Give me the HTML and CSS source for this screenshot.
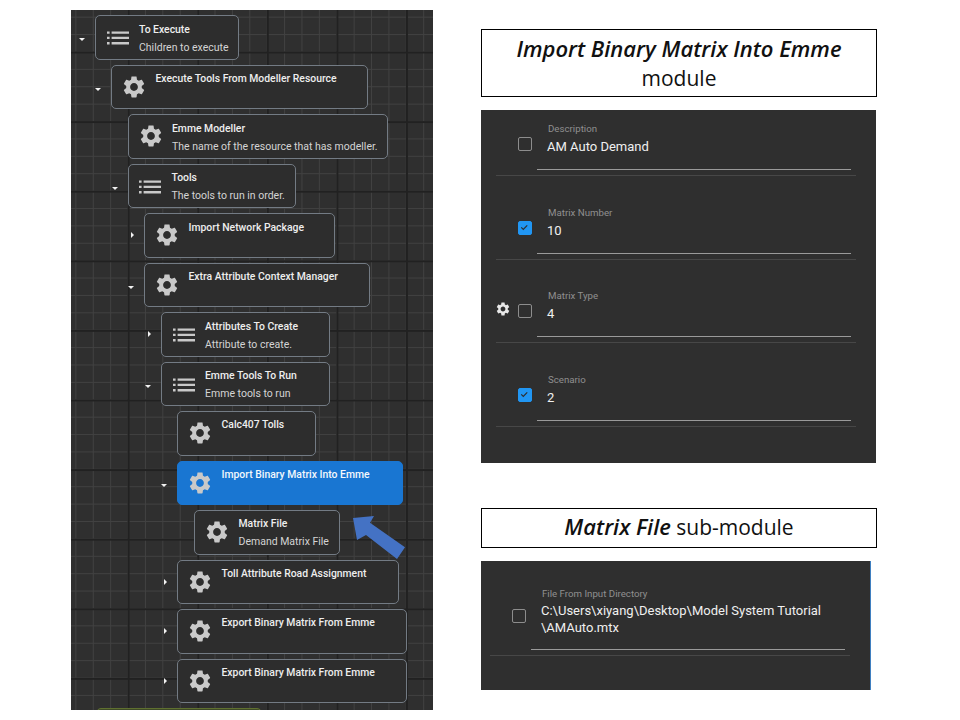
FILE: index.html
```html
<!DOCTYPE html>
<html lang="en">
<head>
<meta charset="utf-8">
<title>Import Binary Matrix Into Emme</title>
<link rel="stylesheet" href="styles.css">
</head>
<body>
<svg class="defs" width="0" height="0" aria-hidden="true">
  <symbol id="gear" viewBox="0 0 24 24"><path d="M19.14 12.94c.04-.3.06-.61.06-.94 0-.32-.02-.64-.07-.94l2.03-1.58c.18-.14.23-.41.12-.61l-1.92-3.32c-.12-.22-.37-.29-.59-.22l-2.39.96c-.5-.38-1.03-.7-1.62-.94L14.4 2.81c-.04-.24-.24-.41-.48-.41h-3.84c-.24 0-.43.17-.47.41L9.25 5.35c-.59.24-1.13.57-1.62.94l-2.39-.96c-.22-.08-.47 0-.59.22L2.74 8.87c-.12.21-.08.47.12.61l2.03 1.58c-.05.3-.09.63-.09.94s.02.64.07.94l-2.03 1.58c-.18.14-.23.41-.12.61l1.92 3.32c.12.22.37.29.59.22l2.39-.96c.5.38 1.03.7 1.62.94l.36 2.54c.05.24.24.41.48.41h3.84c.24 0 .44-.17.47-.41l.36-2.54c.59-.24 1.13-.56 1.62-.94l2.39.96c.22.08.47 0 .59-.22l1.92-3.32c.12-.22.07-.47-.12-.61l-2.01-1.58zM12 15.6c-1.98 0-3.6-1.62-3.6-3.6s1.62-3.6 3.6-3.6 3.6 1.62 3.6 3.6-1.62 3.6-3.6 3.6z"/></symbol>
  <symbol id="list" viewBox="0 0 22 14"><path d="M0 .5h2.6v2.3H0zM4.6.5H22v2.3H4.6zM0 5.8h2.6v2.3H0zM4.6 5.8H22v2.3H4.6zM0 11.1h2.6v2.3H0zM4.6 11.1H22v2.3H4.6z"/></symbol>
</svg>
<main class="page">
  <section class="canvas">
    <div class="tree">
      <div class="node w-hidden d0-hidden"></div>
      <div class="node d0 w1"><i class="tog down"></i><svg class="ico-list"><use href="#list"/></svg><div class="txt"><b>To Execute</b><span>Children to execute</span></div></div>
      <div class="node d1 w2"><i class="tog down"></i><svg class="ico-gear"><use href="#gear"/></svg><div class="txt"><b>Execute Tools From Modeller Resource</b></div></div>
      <div class="node d2 w3"><svg class="ico-gear"><use href="#gear"/></svg><div class="txt"><b>Emme Modeller</b><span>The name of the resource that has modeller.</span></div></div>
      <div class="node d2 w4"><i class="tog down"></i><svg class="ico-list"><use href="#list"/></svg><div class="txt"><b>Tools</b><span>The tools to run in order.</span></div></div>
      <div class="node d3 w5"><i class="tog right"></i><svg class="ico-gear"><use href="#gear"/></svg><div class="txt"><b>Import Network Package</b></div></div>
      <div class="node d3 w6"><i class="tog down"></i><svg class="ico-gear"><use href="#gear"/></svg><div class="txt"><b>Extra Attribute Context Manager</b></div></div>
      <div class="node d4 w7"><i class="tog right"></i><svg class="ico-list"><use href="#list"/></svg><div class="txt"><b>Attributes To Create</b><span>Attribute to create.</span></div></div>
      <div class="node d4 w7"><i class="tog down"></i><svg class="ico-list"><use href="#list"/></svg><div class="txt"><b>Emme Tools To Run</b><span>Emme tools to run</span></div></div>
      <div class="node d5 w8"><svg class="ico-gear"><use href="#gear"/></svg><div class="txt"><b>Calc407 Tolls</b></div></div>
      <div class="node d5 w9 selected"><i class="tog down"></i><svg class="ico-gear"><use href="#gear"/></svg><div class="txt"><b>Import Binary Matrix Into Emme</b></div></div>
      <div class="node d6 w10"><svg class="ico-gear"><use href="#gear"/></svg><div class="txt"><b>Matrix File</b><span>Demand Matrix File</span></div></div>
      <div class="node d5 w11"><i class="tog right"></i><svg class="ico-gear"><use href="#gear"/></svg><div class="txt"><b>Toll Attribute Road Assignment</b></div></div>
      <div class="node d5 w12"><i class="tog right"></i><svg class="ico-gear"><use href="#gear"/></svg><div class="txt"><b>Export Binary Matrix From Emme</b></div></div>
      <div class="node d5 w12"><i class="tog right"></i><svg class="ico-gear"><use href="#gear"/></svg><div class="txt"><b>Export Binary Matrix From Emme</b></div></div>
      <div class="node green"></div>
    </div>
    <svg class="arrow" viewBox="0 0 60 50"><polygon points="2,3 23,1 19,7.7 54,32.3 46,44 15,20 6,25"/></svg>
  </section>
  <section class="side">
    <h2 class="title big"><em>Import Binary Matrix Into Emme</em><br>module</h2>
    <div class="panel main">
      <div class="row"><span class="check"></span><div class="field"><label>Description</label><p>AM Auto Demand</p></div></div>
      <div class="row"><span class="check on"><svg viewBox="0 0 14 14"><path d="M3 7.2l2.7 2.7L11 4.4"/></svg></span><div class="field"><label>Matrix Number</label><p>10</p></div></div>
      <div class="row"><svg class="row-gear"><use href="#gear"/></svg><span class="check"></span><div class="field"><label>Matrix Type</label><p>4</p></div></div>
      <div class="row"><span class="check on"><svg viewBox="0 0 14 14"><path d="M3 7.2l2.7 2.7L11 4.4"/></svg></span><div class="field"><label>Scenario</label><p>2</p></div></div>
    </div>
    <h2 class="title small"><em>Matrix File</em> sub-module</h2>
    <div class="panel sub">
      <div class="row"><span class="check"></span><div class="field"><label>File From Input Directory</label><p>C:\Users\xiyang\Desktop\Model System Tutorial<br>\AMAuto.mtx</p></div></div>
    </div>
  </section>
</main>
</body>
</html>
```
FILE: styles.css
```css
* { box-sizing: border-box; }
html, body { margin: 0; padding: 0; background: #fff; }
.defs { position: absolute; }
.page { width: 960px; height: 720px; display: flex; align-items: flex-start; padding: 10px 0 0 71px; overflow: hidden; font-family: Roboto, "Liberation Sans", sans-serif; }

/* node-graph canvas */
.canvas {
  position: relative; width: 362px; height: 700px; overflow: hidden; flex: none;
  background-color: #2f2f2f;
  background-image:
    linear-gradient(#212121 1.5px, transparent 1.5px),
    linear-gradient(90deg, #212121 1.5px, transparent 1.5px),
    linear-gradient(#414141 1px, transparent 1px),
    linear-gradient(90deg, #414141 1px, transparent 1px);
  background-size: 69.6px 69.6px, 69.6px 69.6px, 17.4px 17.4px, 17.4px 17.4px;
  background-position: 0 41.5px, 56.6px 0, 0 6.7px, 4.4px 0;
}
.tree { display: flex; flex-direction: column; align-items: flex-start; gap: 4.9px; margin-top: -44.2px; }
.node {
  position: relative; flex: none; height: 44.6px; display: flex; align-items: flex-start;
  background: #2d2d2d; border: 1px solid #737b84; border-radius: 5px; color: #eee;
}
.d0 { margin-left: 24px; }
.d1 { margin-left: 40px; }
.d2 { margin-left: 56.5px; }
.d3 { margin-left: 73px; }
.d4 { margin-left: 90px; }
.d5 { margin-left: 106px; }
.d6 { margin-left: 123px; }
.d0-hidden { margin-left: 26px; width: 133px; }
.w1 { width: 143.5px; }
.w2 { width: 257px; }
.w3 { width: 260.5px; }
.w4 { width: 168.5px; }
.w5 { width: 190.5px; }
.w6 { width: 226px; }
.w7 { width: 168.5px; }
.w8 { width: 139px; }
.w9 { width: 225.5px; }
.w10 { width: 146px; }
.w11 { width: 221.5px; }
.w12 { width: 229.5px; }
.selected { background: #1976d2; border-color: #1976d2; color: #f4f8fc; }
.green { margin-left: 25px; width: 166px; background: #3f4a26; border-color: #5f7030; }

.ico-gear { width: 26px; height: 26px; margin: 8px 0 0 9px; flex: none; fill: #c9c9c9; }
.ico-list { width: 22px; height: 14px; margin: 15px 0 0 10.5px; flex: none; fill: #c9c9c9; }
.ico-gear + .txt { margin-left: 8.5px; }
.ico-list + .txt { margin-left: 10.5px; }
.txt { display: flex; flex-direction: column; padding-top: 6.3px; white-space: nowrap; font-size: 10.4px; }
.txt b { font-weight: 500; line-height: 14px; }
.txt span { font-weight: 400; font-size: 10.5px; line-height: 14px; margin-top: 4px; color: #d4d4d4; }

.tog { position: absolute; }
.tog.down { left: -17px; top: 22px; border-left: 3.5px solid transparent; border-right: 3.5px solid transparent; border-top: 3.5px solid #f2f2f2; }
.tog.right { left: -14px; top: 18px; border-top: 3.5px solid transparent; border-bottom: 3.5px solid transparent; border-left: 3.5px solid #f2f2f2; }

.arrow { position: absolute; left: 280px; top: 505px; width: 60px; height: 50px; fill: #4472c4; }

/* right column */
.side { margin-left: 48px; width: 396px; flex: none; display: flex; flex-direction: column; padding-top: 19px; }
.title { margin: 0; border: 1.5px solid #000; background: #fff; color: #111; text-align: center; font-family: "Open Sans", "Liberation Sans", sans-serif; font-weight: 400; font-size: 21px; line-height: 29px; }
.title em { font-weight: 600; font-style: italic; font-size: 22px; }
.title.big { height: 68px; padding-top: 3.5px; }
.title.small { height: 40px; margin-top: 45px; padding-top: 3px; }

.panel { background: #2f2f2f; color: #eee; }
.main { width: 395px; height: 353px; margin-top: 13px; padding: 0 20px 0 15px; }
.sub { width: 390px; height: 129px; margin-top: 13px; padding: 0 0 0 9px; border-right: 1px solid #3f7fc0; }
.row { position: relative; height: 66px; display: flex; align-items: flex-start; border-bottom: 1px solid #474747; }
.row + .row { margin-top: 17.5px; }
.main .row { padding-left: 22px; }
.sub .row { width: 360px; height: 95px; padding-left: 22px; }
.check { flex: none; width: 14px; height: 14px; margin-top: 27px; border: 1.8px solid #8d8d8d; border-radius: 2px; }
.check.on { background: #2196f3; border-color: #2196f3; }
.check svg { display: block; width: 10.5px; height: 10.5px; fill: none; stroke: #2f2f2f; stroke-width: 1.6; }
.row-gear { position: absolute; left: -1px; top: 24px; width: 16px; height: 16px; fill: #e8e8e8; }
.field { flex: 1; align-self: stretch; margin: 0 5px 5px 5px; padding: 13.3px 0 0 10px; border-bottom: 1px solid #9a9a9a; }
.field label { display: block; font-size: 9.7px; line-height: 12px; color: #8f8f8f; padding-left: 1px; }
.field p { margin: 3px 0 0; font-size: 13px; font-weight: 400; line-height: 17px; color: #f0f0f0; }
.sub .check { margin-top: 48px; }
.sub .field { margin-left: 5px; padding: 26.5px 0 0 10px; }
.sub .field p { margin-top: 3.5px; line-height: 16.5px; }
```
